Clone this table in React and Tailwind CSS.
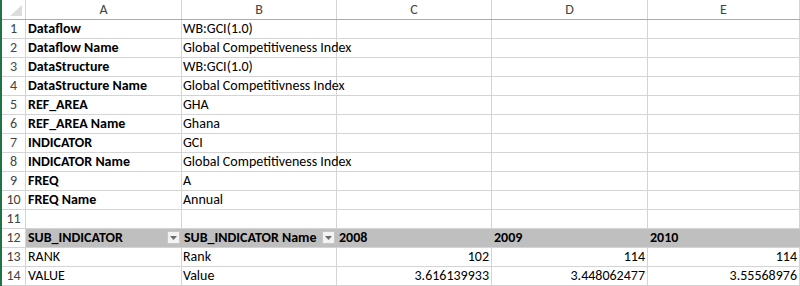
const cols = ["A", "B", "C", "D", "E"]
const widths = ["w-[156px]", "w-[155px]", "w-[155px]", "w-[156px]", "flex-1"]

const rows = [
    { a: "Dataflow", b: "WB:GCI(1.0)", bold: true },
    { a: "Dataflow Name", b: "Global Competitiveness Index", bold: true },
    { a: "DataStructure", b: "WB:GCI(1.0)", bold: true },
    { a: "DataStructure Name", b: "Global Competitivness Index", bold: true },
    { a: "REF_AREA", b: "GHA", bold: true },
    { a: "REF_AREA Name", b: "Ghana", bold: true },
    { a: "INDICATOR", b: "GCI", bold: true },
    { a: "INDICATOR Name", b: "Global Competitiveness Index", bold: true },
    { a: "FREQ", b: "A", bold: true },
    { a: "FREQ Name", b: "Annual", bold: true },
    { a: "", b: "" },
    { header: true, a: "SUB_INDICATOR", b: "SUB_INDICATOR Name", c: "2008", d: "2009", e: "2010" },
    { a: "RANK", b: "Rank", c: "102", d: "114", e: "114", num: true },
    { a: "VALUE", b: "Value", c: "3.616139933", d: "3.448062477", e: "3.55568976", num: true },
]

const FilterButton = () => (
    <div className="ml-auto mr-[2px] mb-[1px] w-[13px] h-[13px] shrink-0 bg-[#f3f3f3] border border-[#c6c6c6] flex items-center justify-center">
        <svg width="7" height="4" viewBox="0 0 7 4">
            <path d="M0 0 L7 0 L3.5 4 Z" fill="#6b6b6b" />
        </svg>
    </div>
)

const Row = ({ n, row }) => {
    const values = [row.a, row.b, row.c, row.d, row.e]
    if (row.header) {
        return (
            <div className="flex h-[19px]">
                <div className="w-[24px] shrink-0 border-r border-b border-[#d4d4d4] bg-white flex items-end justify-center text-[#444] pb-[2px]">{n}</div>
                <div className="flex flex-1 bg-[#bfbfbf] border-b border-[#d4d4d4] font-bold text-black">
                    {values.map((v, i) => (
                        <div key={i} className={`${widths[i]} shrink-0 flex items-end pl-[2px] pb-[2px] whitespace-nowrap`}>
                            <span>{v}</span>
                            {i < 2 && <FilterButton />}
                        </div>
                    ))}
                </div>
            </div>
        )
    }
    return (
        <div className="flex h-[19px]">
            <div className="w-[24px] shrink-0 border-r border-b border-[#d4d4d4] flex items-end justify-center text-[#444] pb-[2px]">{n}</div>
            {values.map((v, i) => (
                <div
                    key={i}
                    className={`${widths[i]} shrink-0 border-r border-b border-[#d4d4d4] flex items-end pb-[2px] whitespace-nowrap ${i === 0 ? "pl-[2px]" : "pl-[1px]"} ${row.num && i > 1 ? "justify-end pr-[2px]" : ""} ${row.bold && i === 0 ? "font-bold" : ""}`}
                >
                    {v}
                </div>
            ))}
        </div>
    )
}

const App = () => {
    return (
        <div className="w-[800px] h-[286px] overflow-hidden bg-white border-l-2 border-[#217346] font-['Carlito','Lato',sans-serif] text-[14px] leading-none text-black">
            <div className="flex h-[20px] border-b border-[#ababab]">
                <div className="w-[24px] shrink-0 border-r border-[#d4d4d4] relative">
                    <svg className="absolute right-[3px] bottom-[3px]" width="12" height="11" viewBox="0 0 12 11">
                        <path d="M12 0 L12 11 L0 11 Z" fill="#dcdcdc" />
                    </svg>
                </div>
                {cols.map((c, i) => (
                    <div key={c} className={`${widths[i]} shrink-0 border-r border-[#d4d4d4] flex items-center justify-center text-[#444] text-[14px]`}>
                        {c}
                    </div>
                ))}
            </div>
            {rows.map((r, i) => (
                <Row key={i} n={i + 1} row={r} />
            ))}
        </div>
    )
}

export default App
